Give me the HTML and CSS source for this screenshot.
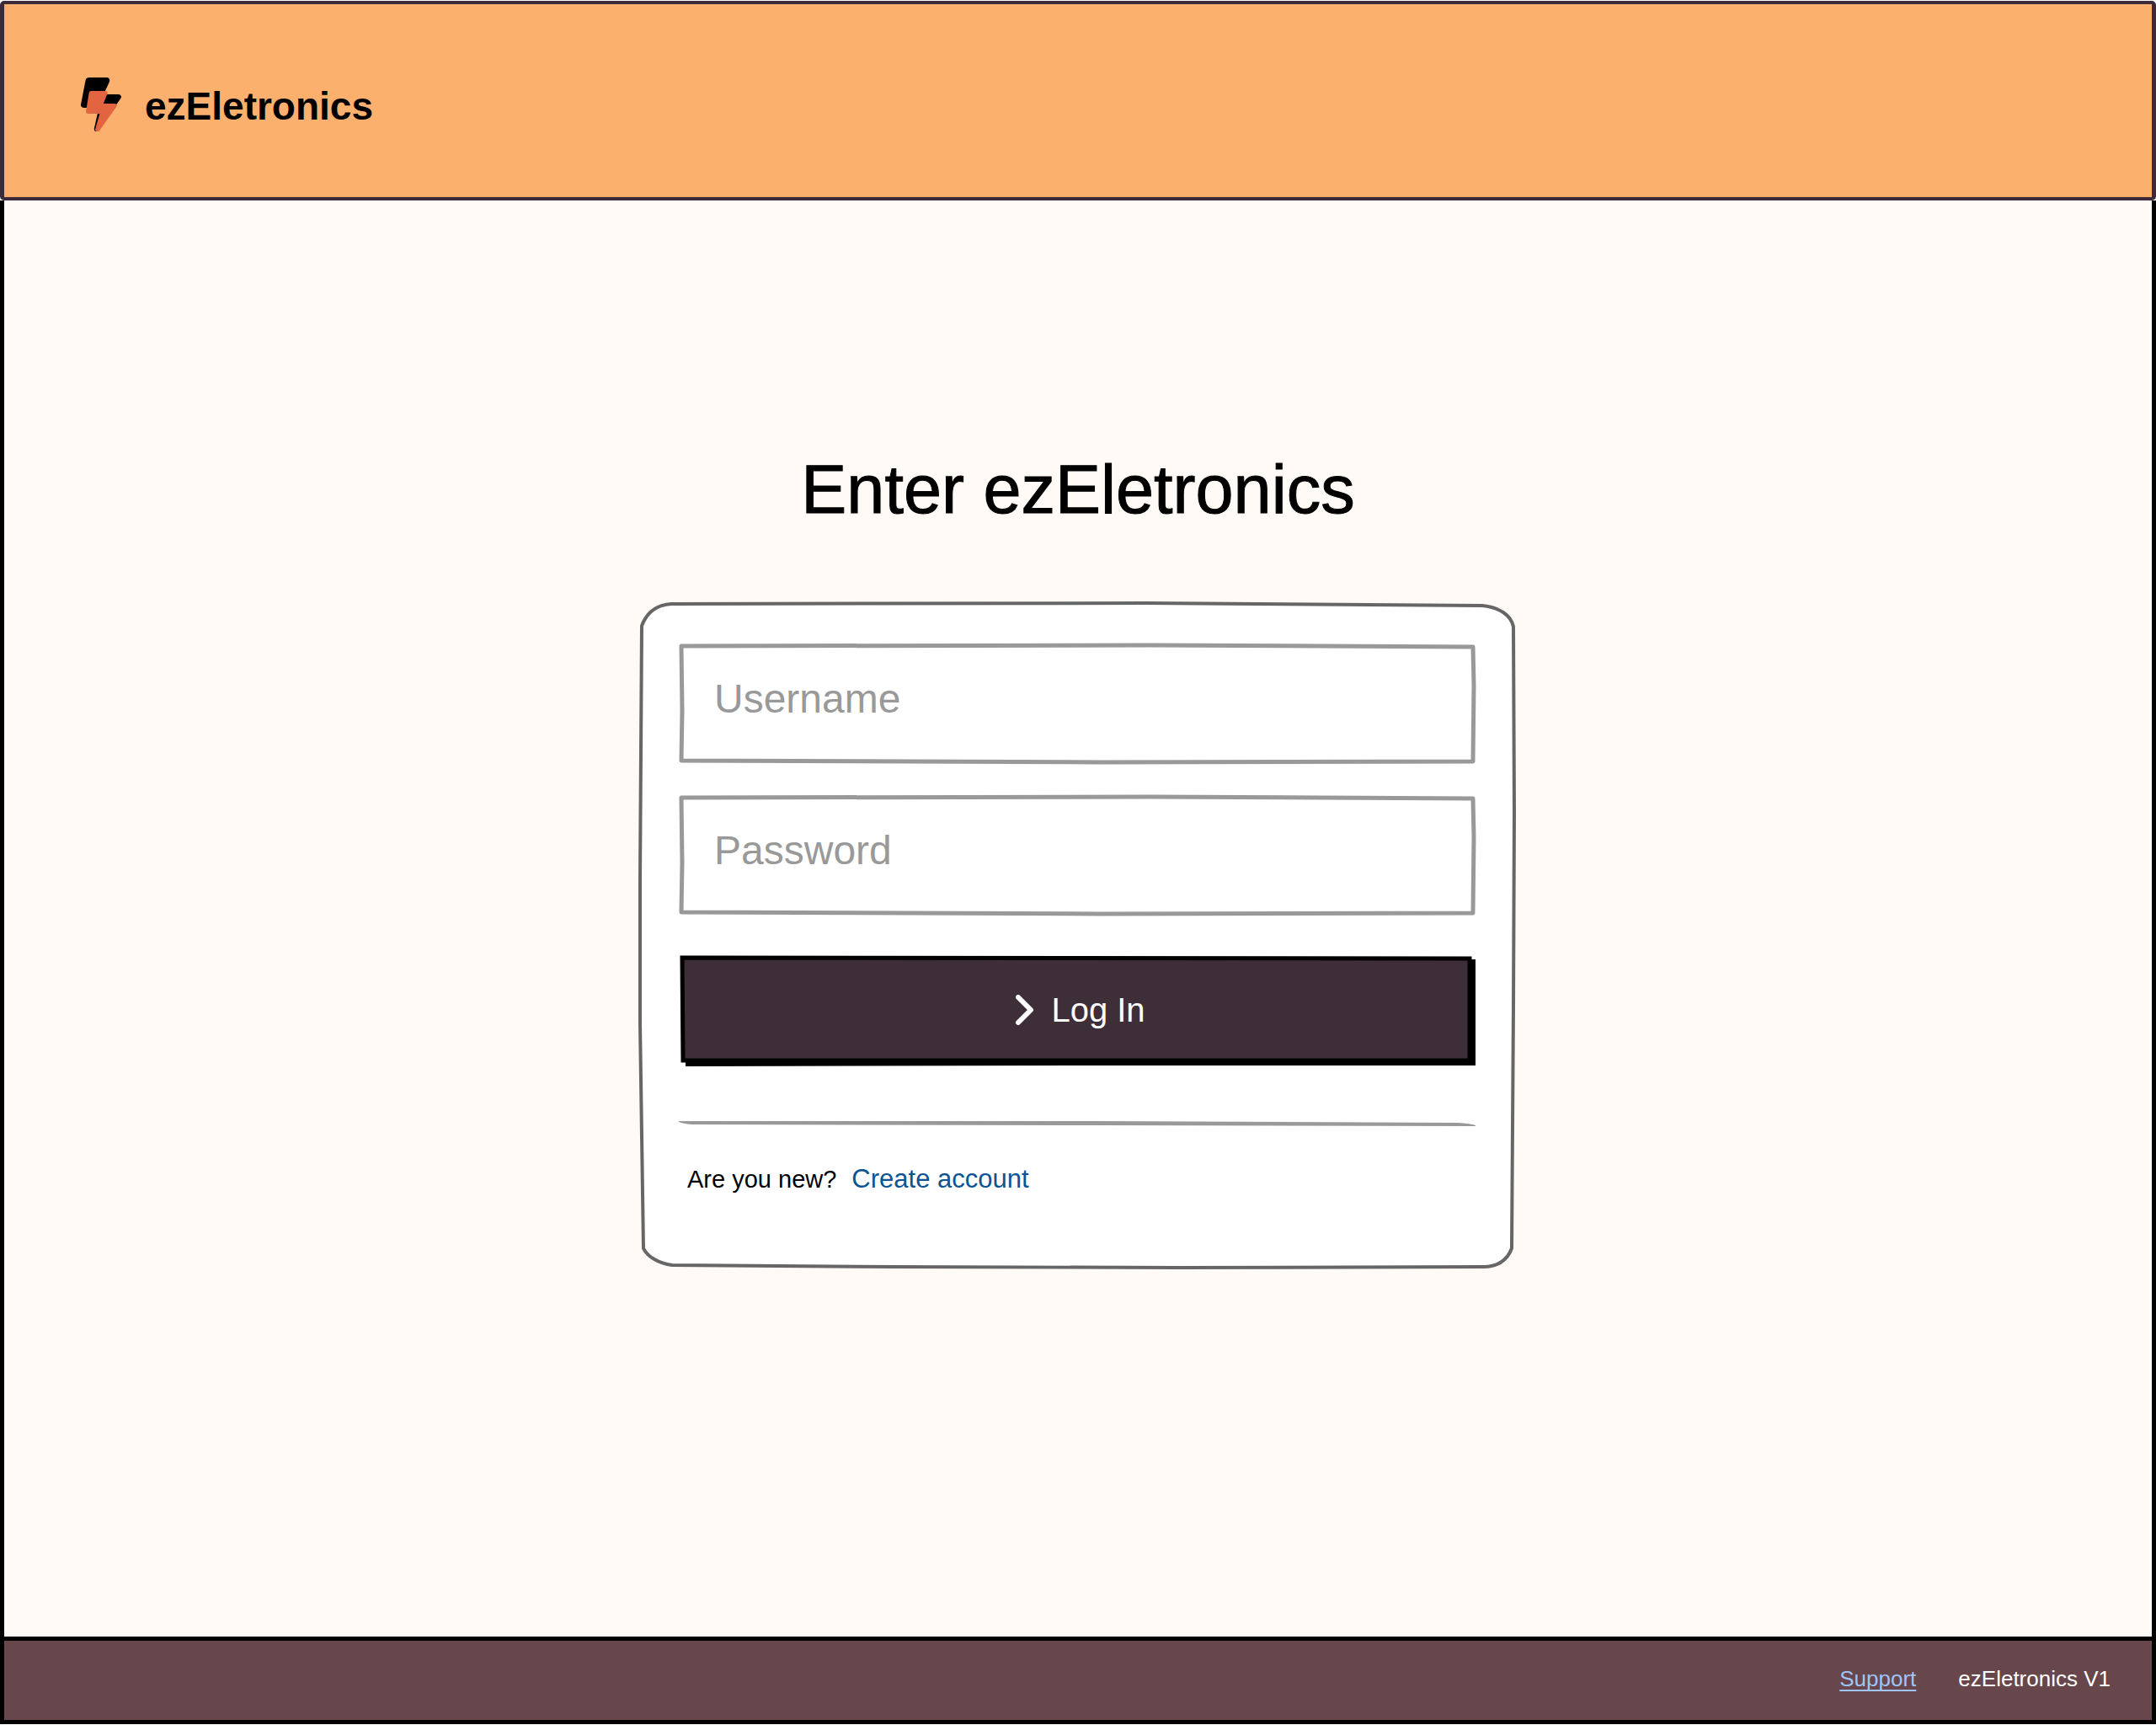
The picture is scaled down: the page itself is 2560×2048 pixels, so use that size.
FILE: index.html
```html
<!DOCTYPE html>
<html lang="en">
<head>
  <meta charset="utf-8">
  <meta name="viewport" content="width=device-width, initial-scale=1">
  <title>ezEletronics</title>
  <link rel="stylesheet" href="styles.css">
</head>
<body>
  <div class="page">
    <header class="header">
      <svg class="logo" viewBox="0 0 48 64" aria-hidden="true">
        <path transform="scale(.15 .125)" fill="#000" d="M296 160H180.6l46-120C232 15 222 0 206 0H70C50 0 39 8.900 37 28l-37 230C-1.700 275.200 9.500 288 24 288h118.700L106 482.500c-3.600 15.200 4 29.500 14 29.500 8.400 0 16.400-4.400 20.800-12l176-304c9.300-15.900-2.200-36-20.700-36z"/>
        <path transform="translate(6 16) scale(.115 .094)" fill="#e36440" d="M296 160H180.600l42.600-129.800C227.200 15 215.700 0 200 0H56C44 0 33.800 8.900 32.200 20.800l-32 240C-1.700 275.200 9.500 288 24 288h118.700L96.600 482.500c-3.600 15.200 8 29.500 23.300 29.500 8.400 0 16.400-4.400 20.800-12l176-304c9.300-15.900-2.200-36-20.700-36z"/>
      </svg>
      <span class="brand">ezEletronics</span>
    </header>

    <main class="main">
      <h1 class="title">Enter ezEletronics</h1>
      <form class="card">
        <svg class="sketch" viewBox="0 0 1040 792" preserveAspectRatio="none" aria-hidden="true">
          <path fill="#fff" stroke="#666" stroke-width="4" d="M37 2L600 1L1000 4C1020 6 1034 15 1037 29L1038 250L1037 480L1035 768C1030 782 1018 790 1002 790L640 791L300 790L38 788C22 786 9 778 4 768L0 500L0 330L2 28C8 12 20 3 37 2Z"/>
        </svg>
        <div class="field">
          <svg class="sketch" viewBox="0 0 946 143" preserveAspectRatio="none" aria-hidden="true">
            <path fill="none" stroke="#999" stroke-width="5" stroke-linejoin="round" d="M3 3L560 2L943 4L944 50L943 140L500 141L3 139L4 80Z"/>
          </svg>
          <input class="input" type="text" name="username" placeholder="Username" aria-label="Username">
        </div>
        <div class="field">
          <svg class="sketch" viewBox="0 0 946 143" preserveAspectRatio="none" aria-hidden="true">
            <path fill="none" stroke="#999" stroke-width="5" stroke-linejoin="round" d="M3 3L560 2L943 4L944 50L943 140L500 141L3 139L4 80Z"/>
          </svg>
          <input class="input" type="password" name="password" placeholder="Password" aria-label="Password">
        </div>
        <button class="login" type="submit">
          <svg class="sketch" viewBox="0 0 946 132" preserveAspectRatio="none" aria-hidden="true">
            <path fill="#000" d="M8 6L946 5L946 131L500 131L8 132Z"/>
            <path fill="#3d2e38" stroke="#000" stroke-width="5" d="M4 3L939 4L939 125L400 125L5 125Z"/>
          </svg>
          <svg class="chevron" viewBox="0 0 22 36" aria-hidden="true">
            <path fill="none" stroke="#fff" stroke-width="6" stroke-linecap="round" stroke-linejoin="round" d="M3 3L18 18L3 33"/>
          </svg>
          <span class="login-text">Log In</span>
        </button>
        <svg class="rule" viewBox="0 0 946 6" preserveAspectRatio="none" aria-hidden="true">
          <path fill="#999" d="M0 0L500 0L925 2Q940 3 946 5L946 6L500 5L15 4Q5 3 0 1Z"/>
        </svg>
        <p class="signup">
          <span>Are you new?</span>
          <a class="create" href="#create">Create account</a>
        </p>
      </form>
    </main>

    <footer class="footer">
      <a class="support" href="#support">Support</a>
      <span>ezEletronics V1</span>
    </footer>
  </div>
</body>
</html>
```

FILE: styles.css
```css
* {
  box-sizing: border-box;
}

body {
  margin: 0;
  background: #fff;
  color: #000;
  font-family: "Liberation Sans", Arial, sans-serif;
}

.page {
  display: flex;
  flex-direction: column;
  min-height: 100vh;
  padding: 1px 0;
}

.header {
  display: flex;
  align-items: center;
  gap: 28px;
  min-height: 237px;
  padding: 9px 91px 0;
  border: solid #3d2b3b;
  border-width: 4px 5px;
  border-radius: 5px;
  background: #fcb06e;
}

.logo {
  width: 48px;
  height: 64px;
  flex: none;
}

.brand {
  padding-top: 3px;
  font-size: 46px;
  line-height: 56px;
  font-weight: 700;
}

.main {
  flex: 1;
  display: flex;
  flex-direction: column;
  align-items: center;
  gap: 86px;
  padding: 295px 24px 80px;
  border: solid #000;
  border-width: 0 5px;
  background: #fffaf5;
}

.title {
  margin: 0;
  font-size: 81px;
  line-height: 96px;
  font-weight: 400;
  text-align: center;
  -webkit-text-stroke: 1px #000;
}

.card {
  position: relative;
  display: flex;
  flex-direction: column;
  width: 100%;
  max-width: 1040px;
  padding: 49px 48px 88px 46px;
}

.sketch {
  position: absolute;
  inset: 0;
  width: 100%;
  height: 100%;
  overflow: visible;
  pointer-events: none;
}

.field {
  position: relative;
  height: 143px;
  margin-bottom: 37px;
}

.input {
  position: relative;
  width: 100%;
  height: 100%;
  padding: 0 42px 12px;
  border: 0;
  outline: 0;
  background: transparent;
  color: #000;
  font: 48px "Liberation Sans", Arial, sans-serif;
}

.input::placeholder {
  color: #999;
  opacity: 1;
}

.login {
  position: relative;
  display: flex;
  align-items: center;
  justify-content: center;
  gap: 20px;
  height: 132px;
  margin-top: 10px;
  padding: 0 0 2px 8px;
  border: 0;
  background: none;
  color: #fff;
  font: 40px "Liberation Sans", Arial, sans-serif;
  cursor: pointer;
}

.chevron {
  position: relative;
  width: 22px;
  height: 36px;
}

.login-text {
  position: relative;
}

.rule {
  position: relative;
  width: 100%;
  height: 6px;
  margin: 65px 0 45px;
}

.signup {
  position: relative;
  display: flex;
  align-items: baseline;
  gap: 18px;
  margin: 0;
  padding-left: 10px;
  font-size: 29px;
  line-height: 36px;
}

.create {
  color: #0b5394;
  font-size: 31px;
  text-decoration: none;
}

.footer {
  display: flex;
  align-items: center;
  justify-content: flex-end;
  gap: 50px;
  min-height: 104px;
  padding: 0 49px 5px;
  border: 5px solid #000;
  background: #67464c;
  color: #fff;
  font-size: 26px;
  line-height: 32px;
}

.support {
  color: #9fc5f8;
  text-decoration: underline;
  text-decoration-thickness: 2px;
  text-underline-offset: 4px;
  text-decoration-skip-ink: none;
}
```
